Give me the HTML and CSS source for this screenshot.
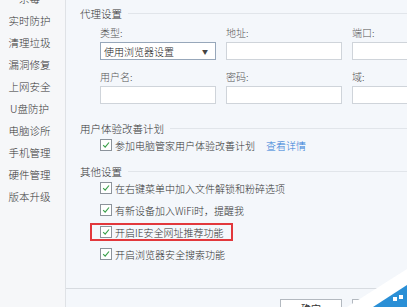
FILE: index.html
```html
<!DOCTYPE html>
<html lang="zh">
<head>
<meta charset="utf-8">
<link rel="stylesheet" href="styles.css">
</head>
<body>
<div class="window">
  <nav class="sidebar">
    <ul class="nav-list">
      <li>杀毒</li>
      <li>实时防护</li>
      <li>清理垃圾</li>
      <li>漏洞修复</li>
      <li>上网安全</li>
      <li>U盘防护</li>
      <li>电脑诊所</li>
      <li>手机管理</li>
      <li>硬件管理</li>
      <li>版本升级</li>
    </ul>
  </nav>
  <main class="main">
    <div class="content">
      <div class="section-title">代理设置</div>
      <div class="fields">
        <div class="field">
          <label class="label">类型:</label>
          <div class="select"><span>使用浏览器设置</span><span class="arrow">▼</span></div>
        </div>
        <div class="field">
          <label class="label">地址:</label>
          <div class="input"></div>
        </div>
        <div class="field">
          <label class="label">端口:</label>
          <div class="input"></div>
        </div>
        <div class="field">
          <label class="label">用户名:</label>
          <div class="input"></div>
        </div>
        <div class="field">
          <label class="label">密码:</label>
          <div class="input"></div>
        </div>
        <div class="field">
          <label class="label">域:</label>
          <div class="input"></div>
        </div>
      </div>

      <div class="section-title second">用户体验改善计划</div>
      <div class="check-row single">
        <span class="checkbox"><svg viewBox="0 0 12 12" width="12" height="12"><path d="M2.6 6.2 L5 8.6 L9.6 3" fill="none" stroke="#3aa04a" stroke-width="1.4"/></svg></span>
        <span class="check-text">参加电脑管家用户体验改善计划</span>
        <a class="link">查看详情</a>
      </div>

      <div class="section-title third">其他设置</div>
      <div class="check-list">
        <div class="check-row">
          <span class="checkbox"><svg viewBox="0 0 12 12" width="12" height="12"><path d="M2.6 6.2 L5 8.6 L9.6 3" fill="none" stroke="#3aa04a" stroke-width="1.4"/></svg></span>
          <span class="check-text">在右键菜单中加入文件解锁和粉碎选项</span>
        </div>
        <div class="check-row">
          <span class="checkbox"><svg viewBox="0 0 12 12" width="12" height="12"><path d="M2.6 6.2 L5 8.6 L9.6 3" fill="none" stroke="#3aa04a" stroke-width="1.4"/></svg></span>
          <span class="check-text">有新设备加入WiFi时，提醒我</span>
        </div>
        <div class="check-row highlight">
          <span class="checkbox"><svg viewBox="0 0 12 12" width="12" height="12"><path d="M2.6 6.2 L5 8.6 L9.6 3" fill="none" stroke="#3aa04a" stroke-width="1.4"/></svg></span>
          <span class="check-text">开启IE安全网址推荐功能</span>
        </div>
        <div class="check-row">
          <span class="checkbox"><svg viewBox="0 0 12 12" width="12" height="12"><path d="M2.6 6.2 L5 8.6 L9.6 3" fill="none" stroke="#3aa04a" stroke-width="1.4"/></svg></span>
          <span class="check-text">开启浏览器安全搜索功能</span>
        </div>
      </div>
    </div>
    <div class="footer">
      <button class="btn">确定</button>
      <button class="btn">取消</button>
    </div>
  </main>
  <svg class="watermark" viewBox="0 0 60 40" width="60" height="40">
    <polygon points="0,40 60,2 60,40" fill="#ffffff"/>
    <polygon points="26,40 60,18 60,40" fill="#2a8fd6"/>
    <rect x="46" y="30" width="4" height="4" fill="#ffffff"/>
    <rect x="52" y="28" width="4" height="4" fill="#ffffff"/>
  </svg>
</div>
</body>
</html>
```

FILE: styles.css
```css
* { box-sizing: border-box; }
html, body {
  margin: 0;
  padding: 0;
}
body {
  font-family: "Noto Sans CJK SC", "Noto Sans", sans-serif;
  color: #3a3a3a;
  background: #f4f7fb;
}
.window {
  position: relative;
  display: flex;
  width: 407px;
  height: 307px;
  overflow: hidden;
  background: #f4f7fb;
}
.sidebar {
  width: 66px;
  flex: none;
  background: #f6f7f9;
  border-right: 1px solid #dfe2e6;
}
.nav-list {
  list-style: none;
  margin: -12px 0 0 0;
  padding: 0;
  width: 59px;
}
.nav-list li {
  height: 22px;
  line-height: 22px;
  text-align: center;
  font-size: 10.5px;
  font-weight: 300;
  color: #333;
  white-space: nowrap;
}
.main {
  flex: 1;
  display: flex;
  flex-direction: column;
  min-width: 0;
}
.content {
  flex: 1;
  padding: 5px 0 0 14px;
}
.section-title {
  display: flex;
  align-items: center;
  height: 16px;
  font-size: 10.5px;
  font-weight: 300;
  color: #333;
  white-space: nowrap;
}
.section-title::after {
  content: "";
  flex: 1;
  height: 1px;
  background: #e1e5ea;
  margin-left: 6px;
}
.section-title.second { margin-top: 16px; }
.section-title.third { margin-top: 10px; }
.fields {
  display: grid;
  grid-template-columns: 116px 116px 116px;
  column-gap: 10px;
  row-gap: 9px;
  margin: 4px 0 0 20px;
}
.field {
  display: flex;
  flex-direction: column;
  gap: 1px;
}
.label {
  height: 16px;
  line-height: 16px;
  font-size: 10px;
  font-weight: 300;
  color: #555;
}
.input, .select {
  height: 18px;
  background: #fff;
  border: 1px solid #cfd4da;
}
.select {
  border-color: #97a7ba;
  display: flex;
  align-items: center;
  justify-content: space-between;
  padding: 0 7px 0 3px;
  font-size: 10px;
  font-weight: 300;
  color: #222;
}
.arrow {
  font-size: 6px;
  color: #444;
}
.check-row {
  display: flex;
  align-items: center;
  height: 16px;
  margin-left: 20px;
  font-size: 10px;
  font-weight: 300;
  white-space: nowrap;
}
.check-row.single { margin-top: 1px; }
.checkbox {
  width: 12px;
  height: 12px;
  border: 1px solid #8c939b;
  background: #fff;
  display: flex;
  align-items: center;
  justify-content: center;
  margin-right: 3px;
  flex: none;
}
.checkbox svg {
  display: block;
  width: 10px;
  height: 10px;
}
.check-text { color: #333; }
.link {
  color: #2f7bd6;
  margin-left: 11px;
}
.check-list {
  display: flex;
  flex-direction: column;
  gap: 6px;
  margin-top: 1px;
}
.check-row.highlight {
  width: fit-content;
  height: 18px;
  margin: -1px 0 -1px 10px;
  padding: 0 8px 0 8px;
  border: 2px solid #e2383c;
}
.footer {
  flex: none;
  height: 19px;
  border-top: 1px solid #d7dbe0;
  padding: 10px 0 0 214px;
  display: flex;
  gap: 10px;
  align-items: flex-start;
}
.btn {
  flex: none;
  width: 62px;
  height: 20px;
  background: #fff;
  border: 1px solid #b3b9c0;
  font-family: "Noto Sans CJK SC", sans-serif;
  font-size: 10px;
  color: #333;
  padding: 0;
  line-height: 18px;
}
.watermark {
  position: absolute;
  right: 0;
  bottom: 0;
}
```
